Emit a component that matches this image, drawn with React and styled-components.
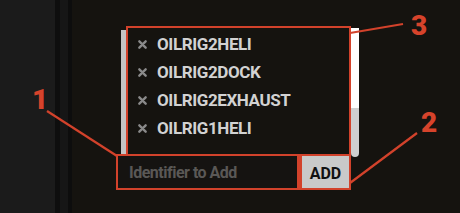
import React from 'react';
import styled, { createGlobalStyle } from 'styled-components';

const items = ['OILRIG2HELI', 'OILRIG2DOCK', 'OILRIG2EXHAUST', 'OILRIG1HELI'];

const Global = createGlobalStyle`
  html, body {
    margin: 0;
    padding: 0;
    background: #15130f;
    overflow: hidden;
  }
  * { box-sizing: border-box; }
`;

const App = () => {
  return (
    <Page>
      <Global />
      <LeftPanel />
      <Divider />
      <Main>
        <Widget>
          <ListRow>
            <Strip />
            <ListBox>
              {items.map((it) => (
                <Item key={it}>
                  <Remove viewBox="0 0 10 10">
                    <path d="M1.5 1.5 L8.5 8.5 M8.5 1.5 L1.5 8.5" />
                  </Remove>
                  <span>{it}</span>
                </Item>
              ))}
            </ListBox>
            <Scrollbar>
              <div className="track" />
              <div className="thumb" />
            </Scrollbar>
          </ListRow>
          <InputRow>
            <Field placeholder="Identifier to Add" />
            <AddButton>ADD</AddButton>
          </InputRow>
        </Widget>
      </Main>
      <Callouts viewBox="0 0 460 213">
        <line x1="47" y1="111" x2="117" y2="156" />
        <line x1="350" y1="183" x2="417" y2="133" />
        <line x1="350" y1="33" x2="403" y2="24" />
      </Callouts>
      <Label $x={32} $y={86}>1</Label>
      <Label $x={421} $y={109}>2</Label>
      <Label $x={411} $y={12}>3</Label>
    </Page>
  );
};

const Page = styled.div`
  position: relative;
  width: 460px;
  height: 213px;
  display: flex;
  background: #15130f;
  font-family: Roboto, 'Liberation Sans', sans-serif;
  overflow: hidden;
`;

const LeftPanel = styled.div`
  width: 55px;
  background: #1b1b1b;
`;

const Divider = styled.div`
  width: 17px;
  background: linear-gradient(
    to right,
    #0e0e0e 0 5px,
    #161616 5px 13px,
    #0d0d0d 13px 17px
  );
`;

const Main = styled.div`
  flex: 1;
  padding: 26px 0 0 44px;
`;

const Widget = styled.div`
  display: flex;
  flex-direction: column;
  width: 243px;
`;

const ListRow = styled.div`
  display: flex;
  align-items: flex-start;
  padding-left: 5px;
`;

const Strip = styled.div`
  width: 5px;
  height: 125px;
  margin-top: 4px;
  background: #c4c4c4;
`;

const ListBox = styled.div`
  width: 225px;
  height: 130px;
  border: 2px solid #d2422b;
  padding: 2px 0 0 10px;
  overflow: hidden;
`;

const Item = styled.div`
  height: 28px;
  display: flex;
  align-items: center;
  gap: 10px;
  color: #d2d2d2;
  font-size: 17px;
  font-weight: 700;
  letter-spacing: -0.4px;
`;

const Remove = styled.svg`
  width: 9px;
  height: 9px;
  flex: none;
  stroke: #8a8a8a;
  stroke-width: 2.6;
  stroke-linecap: round;
  fill: none;
`;

const Scrollbar = styled.div`
  width: 8px;
  margin-top: 2px;
  height: 129px;
  display: flex;
  flex-direction: column;
  .track {
    height: 80px;
    background: #ffffff;
  }
  .thumb {
    flex: 1;
    background: #cfcfcf;
    border-radius: 0 0 4px 4px;
  }
`;

const InputRow = styled.div`
  display: flex;
  margin-top: -3px;
  height: 36px;
`;

const Field = styled.input`
  width: 183px;
  height: 100%;
  border: 2px solid #d2422b;
  background: #151311;
  padding: 0 0 0 11px;
  font-family: Roboto, 'Liberation Sans', sans-serif;
  font-size: 16px;
  font-weight: 700;
  letter-spacing: -0.5px;
  color: #cfcfcf;
  outline: none;
  &::placeholder {
    color: #5a5856;
  }
`;

const AddButton = styled.button`
  width: 52px;
  height: 100%;
  border: 2px solid #d2422b;
  border-left-width: 3px;
  background: #c9c9c9;
  color: #111;
  font-family: Roboto, 'Liberation Sans', sans-serif;
  font-size: 16px;
  font-weight: 700;
  padding: 2px 0 0;
`;

const Callouts = styled.svg`
  position: absolute;
  inset: 0;
  width: 460px;
  height: 213px;
  pointer-events: none;
  line {
    stroke: #d2422b;
    stroke-width: 2.2;
  }
`;

const Label = styled.span`
  position: absolute;
  left: ${(p) => p.$x}px;
  top: ${(p) => p.$y}px;
  color: #d6432b;
  font-family: Roboto, 'Liberation Sans', sans-serif;
  font-weight: 900;
  font-size: 28px;
  line-height: 1;
`;

export default App;
